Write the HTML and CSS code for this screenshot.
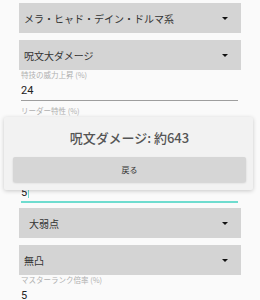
FILE: index.html
```html
<!DOCTYPE html>
<html lang="ja">
<head>
  <meta charset="UTF-8">
  <meta name="viewport" content="width=device-width, initial-scale=1.0">
  <title>ダメージ計算</title>
  <link rel="stylesheet" href="styles.css">
</head>
<body>
  <div class="form">
    <div class="select"><span>メラ・ヒャド・デイン・ドルマ系</span><i class="arrow"></i></div>
    <div class="select"><span>呪文大ダメージ</span><i class="arrow"></i></div>

    <div class="field">
      <label>特技の威力上昇 (%)</label>
      <div class="input">24</div>
    </div>

    <div class="field">
      <label>リーダー特性 (%)</label>
      <div class="input">0</div>
    </div>

    <div class="select"><span>なし</span><i class="arrow"></i></div>

    <div class="field">
      <label>その他 (%)</label>
      <div class="input focused">5<span class="cursor"></span></div>
    </div>

    <div class="select indent"><span>大弱点</span><i class="arrow"></i></div>
    <div class="select"><span>無凸</span><i class="arrow"></i></div>

    <div class="field">
      <label>マスターランク倍率 (%)</label>
      <div class="input">5</div>
    </div>
  </div>

  <!-- Result dialog -->
  <div class="dialog">
    <h2>呪文ダメージ: 約643</h2>
    <button class="back-button">戻る</button>
  </div>
</body>
</html>
```

FILE: styles.css
```css
body {
  margin: 0;
  background: #fafafa;
  font-family: 'Noto Sans CJK JP', 'Roboto', sans-serif;
  color: #333;
  overflow: hidden;
}

.form {
  padding: 3px 19px 0 19px;
  display: flex;
  flex-direction: column;
}

.select {
  height: 30px;
  background: #d4d4d4;
  display: flex;
  align-items: center;
  justify-content: space-between;
  padding: 0 13px 0 5px;
  font-size: 10px;
  margin-bottom: 7px;
}

.select.indent {
  padding-left: 10px;
}

.arrow {
  width: 0;
  height: 0;
  border-left: 3px solid transparent;
  border-right: 3px solid transparent;
  border-top: 3px solid #111;
}

.field {
  margin: 0 3px 5px 2px;
}

/* labels sit right under a dropdown */
.select + .field {
  margin-top: -7px;
}

.field label {
  display: block;
  height: 10px;
  line-height: 10px;
  font-size: 7.5px;
  color: #b0b0b0;
}

.input {
  height: 20px;
  line-height: 22px;
  font-family: 'Roboto', sans-serif;
  font-size: 11px;
  color: #222;
  border-bottom: 1px solid #9e9e9e;
}

.input.focused {
  border-bottom: 2px solid #6fdccf;
  height: 19px;
}

.cursor {
  display: inline-block;
  width: 1px;
  height: 12px;
  background: #6fdccf;
  vertical-align: -2px;
  margin-left: 1px;
}

/* Result dialog */
.dialog {
  position: absolute;
  left: 4px;
  top: 117px;
  width: 249px;
  box-sizing: border-box;
  padding: 11px 7px 8px 9px;
  background: #f2f2f2;
  border-radius: 2px;
  box-shadow: 0 1px 4px rgba(0, 0, 0, 0.2);
}

.dialog h2 {
  margin: 0 0 9px 0;
  height: 20px;
  line-height: 20px;
  text-align: center;
  font-size: 13px;
  font-weight: 500;
  color: #555;
}

.back-button {
  display: block;
  width: 100%;
  height: 25px;
  border: none;
  border-radius: 2px;
  background: #d6d6d6;
  box-shadow: 0 1px 2px rgba(0, 0, 0, 0.15);
  font-family: 'Noto Sans CJK JP', sans-serif;
  font-size: 8px;
  color: #333;
}
```
